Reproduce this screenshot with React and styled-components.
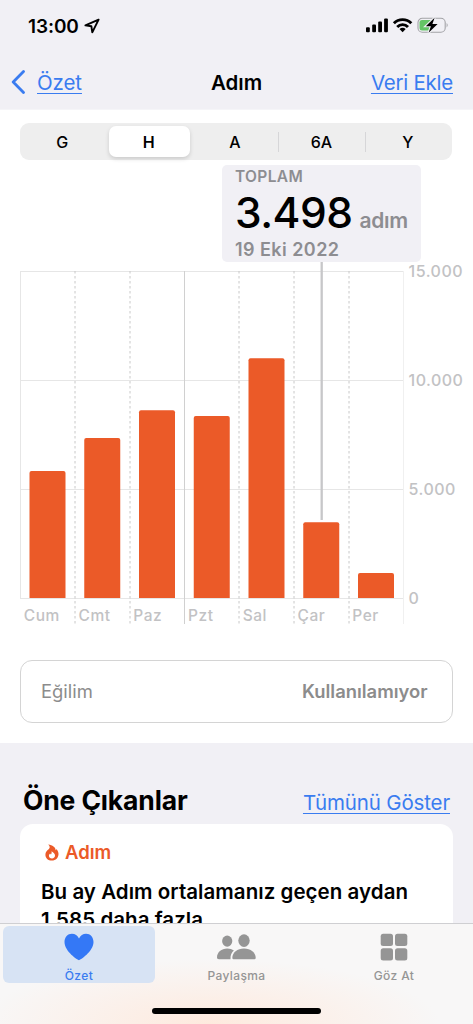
import React from 'react';
import styled, { createGlobalStyle } from 'styled-components';

const days = [
  { name: 'Cum', top: 471 },
  { name: 'Cmt', top: 438 },
  { name: 'Paz', top: 410.3 },
  { name: 'Pzt', top: 416 },
  { name: 'Sal', top: 358.3 },
  { name: 'Çar', top: 522.2 },
  { name: 'Per', top: 573 },
];

const levels = [
  { label: '15.000', y: 271.5 },
  { label: '10.000', y: 380.5 },
  { label: '5.000', y: 489.5 },
  { label: '0', y: 598.5 },
];

const ranges = ['G', 'H', 'A', '6A', 'Y'];

const LEFT = 20.5;
const STEP = 54.75;
const BASE = 598;

const barPath = (x, top) =>
  `M${x} ${BASE}V${top + 2}q0-2 2-2h32q2 0 2 2V${BASE}z`;

const StatusIcons = () => (
  <svg width="84" height="18" viewBox="0 0 84 18">
    <rect x="1" y="11.2" width="3.8" height="5" rx="1" />
    <rect x="7.2" y="8.6" width="3.8" height="7.6" rx="1" />
    <rect x="13.2" y="5.5" width="3.8" height="10.7" rx="1" />
    <rect x="19.1" y="2.4" width="3.8" height="13.8" rx="1" />
    <g fill="none" stroke="#000" strokeWidth="2.9">
      <path d="M28.9 7.2a12.4 12.4 0 0 1 17.4 0" />
      <path d="M32.2 10.9a7.6 7.6 0 0 1 10.8 0" />
    </g>
    <path d="M37.6 16.3l-3.1-3.2a4.5 4.5 0 0 1 6.2 0z" />
    <rect
      x="53"
      y="2.3"
      width="27.2"
      height="13.9"
      rx="4.3"
      fill="none"
      stroke="#a3a3a7"
      strokeWidth="1.1"
    />
    <path d="M81.6 7q2.2 2.2 0 4.4z" fill="#a3a3a7" />
    <path d="M57 4h10v10.5H57a2.5 2.5 0 0 1-2.5-2.5V6.5A2.5 2.5 0 0 1 57 4z" fill="#65c466" />
    <path
      d="M69.6 1.8l-8.8 8.4h5.1l-2.3 6.6 9-8.7h-5.2z"
      stroke="#f1f0f5"
      strokeWidth="2.2"
      paintOrder="stroke"
    />
  </svg>
);

const Chart = () => (
  <ChartSvg viewBox="0 262 473 370">
    {levels.map(({ label, y }) => (
      <g key={label}>
        <line x1="20" x2="403" y1={y} y2={y} stroke="#e6e6e6" />
        <AxisText x="408.5" y={y + 5.5} $size="16px">
          {label}
        </AxisText>
      </g>
    ))}
    <line x1="20.5" x2="20.5" y1="271" y2="598" stroke="#e6e6e6" />
    <line x1="403.5" x2="403.5" y1="271" y2="624" stroke="#f0f0f0" />
    {days.map(({ name, top }, i) => {
      const x = LEFT + STEP * i;
      const lineX = Math.floor(x) + (i === 3 ? 0.5 : 0);
      return (
        <g key={name}>
          {i > 0 && (
            <line
              x1={lineX}
              x2={lineX}
              y1="271"
              y2="624"
              stroke={i === 3 ? '#d0d0d0' : '#c8c8c8'}
              strokeDasharray={i === 3 ? undefined : '2.5 2.5'}
            />
          )}
          <path d={barPath(x + 9, top)} fill="#eb5a28" />
          <AxisText x={x + 3.3} y="620.5" $size="15.5px">
            {name}
          </AxisText>
        </g>
      );
    })}
    <line x1="321.7" x2="321.7" y1="262" y2="520" stroke="#c7c7c9" strokeWidth="2.3" />
  </ChartSvg>
);

const App = () => {
  return (
    <Screen>
      <GlobalStyle />
      <Header>
        <StatusBar>
          <Clock>
            13:00
            <svg width="16" height="16" viewBox="0 0 16 16">
              <path
                d="M14.6 1.6L1.4 7.4l6 .9.9 6z"
                fill="none"
                stroke="#000"
                strokeWidth="1.9"
                strokeLinejoin="round"
              />
            </svg>
          </Clock>
          <StatusIcons />
        </StatusBar>
        <NavBar>
          <BackButton>
            <svg width="14" height="24" viewBox="0 0 14 24">
              <path
                d="M12.5 1.5L2.2 12l10.3 10.5"
                fill="none"
                stroke="#3a7cf0"
                strokeWidth="2.8"
                strokeLinecap="round"
                strokeLinejoin="round"
              />
            </svg>
            <TextLink $spacing="-0.1px">Özet</TextLink>
          </BackButton>
          <NavTitle>Adım</NavTitle>
          <NavEnd>
            <TextLink $spacing="-0.25px">Veri Ekle</TextLink>
          </NavEnd>
        </NavBar>
      </Header>

      <Content>
        <ChartSection>
          <Segments>
            {ranges.map((range, i) => (
              <Segment key={range} $active={range === 'H'} $divided={i > 2}>
                {range}
              </Segment>
            ))}
          </Segments>
          <Callout>
            <CalloutLabel>TOPLAM</CalloutLabel>
            <CalloutValue>
              <span>3.498</span>
              <Unit>adım</Unit>
            </CalloutValue>
            <CalloutDate>19 Eki 2022</CalloutDate>
          </Callout>
          <Chart />
          <TrendCard>
            <span>Eğilim</span>
            <TrendValue>Kullanılamıyor</TrendValue>
          </TrendCard>
        </ChartSection>

        <Highlights>
          <HighlightsHead>
            <HighlightsTitle>Öne Çıkanlar</HighlightsTitle>
            <TextLink $spacing="-0.15px">Tümünü Göster</TextLink>
          </HighlightsHead>
          <HighlightCard>
            <CardLabel>
              <svg width="14" height="17" viewBox="0 0 14 17">
                <path
                  d="M3.2.4C7.6.9 10.5 3 10.7 6.2c.5-.3.7-.7.8-1.2 1.3 1.5 2 3.3 2 5.1 0 3.8-2.7 6.5-6.6 6.5C3 16.6.4 14.1.4 10.7.4 8.2 1.7 6.5 3.3 5.4c1-.8 1.4-1.4 1.4-2.2 0-1-.5-1.9-1.5-2.8z"
                  fill="#eb5a28"
                />
                <path
                  d="M6.5 7.2c2.1 1.1 3.5 2.5 3.5 4.4 0 1.7-1.2 2.9-3 2.9s-3.1-1.1-3.1-2.7c0-1 .5-1.8 1.2-2.4.2.5.4.8.9 1 .6-.9.8-1.9.5-3.2z"
                  fill="#fff"
                />
              </svg>
              Adım
            </CardLabel>
            <CardText>
              Bu ay Adım ortalamanız geçen aydan
              <br />
              1.585 daha fazla
            </CardText>
          </HighlightCard>
        </Highlights>
      </Content>

      <TabBar>
        <Tabs>
          <Tab $active>
            <svg width="30" height="28" viewBox="0 0 30 28">
              <path
                d="M15 27.2C14 27.2.5 18.5.5 9 .5 4.2 3.7.8 7.9.8c3.2 0 5.7 1.7 7.1 4.6C16.4 2.5 18.9.8 22.1.8c4.2 0 7.4 3.4 7.4 8.2 0 9.5-13.5 18.2-14.5 18.2z"
                fill="#3478f6"
              />
            </svg>
            Özet
          </Tab>
          <Tab>
            <svg width="40" height="28" viewBox="1 0 40 28" fill="#959595">
              <ellipse cx="11.2" cy="8.1" rx="5.1" ry="5.6" />
              <path d="M1 24.6c0-5.2 4.5-9 10.2-9 2.6 0 4.9.7 6.7 2-2.2 1.9-3.6 4.4-3.4 8.7H3c-1.3 0-2-.6-2-1.7z" />
              <ellipse cx="28" cy="7.6" rx="5.7" ry="6.3" />
              <path d="M16.3 24.9c0-5.1 5.1-9.3 11.7-9.3s11.7 4.2 11.7 9.3c0 .9-.7 1.4-2 1.4H18.3c-1.3 0-2-.5-2-1.4z" />
            </svg>
            Paylaşma
          </Tab>
          <Tab>
            <svg width="28" height="28" viewBox="0 0 28 28" fill="#959595">
              <rect x=".7" y=".8" width="12.3" height="12.3" rx="2.5" />
              <rect x="15" y=".8" width="12.3" height="12.3" rx="2.5" />
              <rect x=".7" y="15.2" width="12.3" height="12.3" rx="2.5" />
              <rect x="15" y="15.2" width="12.3" height="12.3" rx="2.5" />
            </svg>
            Göz At
          </Tab>
        </Tabs>
        <HomeIndicator />
      </TabBar>
    </Screen>
  );
};

export default App;

const GlobalStyle = createGlobalStyle`
  * {
    box-sizing: border-box;
  }
  body {
    margin: 0;
    font-family: Inter, 'Liberation Sans', sans-serif;
    color: #000;
  }
  svg {
    display: block;
    flex-shrink: 0;
  }
`;

const Screen = styled.div`
  display: flex;
  flex-direction: column;
  width: 473px;
  height: 1024px;
  overflow: hidden;
  background: #f1f0f5;
`;
const Header = styled.header`
  height: 110px;
  flex-shrink: 0;
  border-bottom: 1px solid #f5f5f8;
`;
const StatusBar = styled.div`
  display: flex;
  justify-content: space-between;
  height: 54px;
  padding: 16px 24px 0 28px;
`;
const Clock = styled.div`
  display: flex;
  align-items: center;
  gap: 5px;
  height: 20px;
  font-size: 19px;
  font-weight: 600;
  letter-spacing: -0.1px;
`;
const NavBar = styled.nav`
  display: grid;
  grid-template-columns: 1fr auto 1fr;
  align-items: center;
  height: 56px;
  padding: 0 20px;
`;
const BackButton = styled.div`
  display: flex;
  align-items: center;
  gap: 12px;
  margin-left: -9px;
`;
const NavTitle = styled.h1`
  margin: 0;
  font-size: 20.5px;
  font-weight: 600;
`;
const NavEnd = styled.div`
  text-align: right;
`;
const TextLink = styled.span`
  color: #3a7cf0;
  font-size: 20.5px;
  letter-spacing: ${({ $spacing }) => $spacing};
  text-decoration: underline;
  text-decoration-thickness: 1px;
  text-underline-offset: 3px;
  text-decoration-skip-ink: none;
`;
const Content = styled.main`
  flex: 1;
  min-height: 0;
  overflow: hidden;
`;
const ChartSection = styled.section`
  height: 633px;
  padding-top: 13px;
  background: #fff;
`;
const Segments = styled.div`
  display: grid;
  grid-template-columns: repeat(5, 1fr);
  width: 432px;
  height: 37px;
  margin-left: 20px;
  padding: 3px 0;
  border-radius: 9px;
  background: #eeeeee;
`;
const Segment = styled.div`
  display: flex;
  align-items: center;
  justify-content: center;
  margin: 0 2.5px;
  padding-right: 2px;
  border-radius: 7px;
  font-size: 16px;
  font-weight: ${({ $active }) => ($active ? 600 : 500)};
  background: ${({ $active }) => ($active ? '#fff' : 'none')};
  box-shadow: ${({ $active }) => ($active ? '0 2px 4px rgba(0, 0, 0, 0.15)' : 'none')};

  &::before {
    content: '';
    display: ${({ $divided }) => ($divided ? 'block' : 'none')};
    width: 1px;
    height: 20px;
    margin-left: -3.5px;
    margin-right: auto;
    background: #d6d6d8;
  }
  &::after {
    content: '';
    display: ${({ $divided }) => ($divided ? 'block' : 'none')};
    margin-left: auto;
    margin-right: -2.5px;
  }
`;
const Callout = styled.div`
  width: 199px;
  height: 97px;
  margin: 5px 0 0 222px;
  padding: 3px 0 0 13px;
  border-radius: 5px;
  background: #f1f0f5;
  color: #8d8d91;
  font-weight: 600;
  white-space: nowrap;
`;
const CalloutLabel = styled.div`
  font-size: 15.5px;
  line-height: 18px;
  letter-spacing: 0.35px;
`;
const CalloutValue = styled.div`
  display: flex;
  align-items: baseline;
  gap: 7px;
  height: 53px;
  color: #000;
  font-size: 42.5px;
  font-weight: 500;
  line-height: 53px;
  letter-spacing: -0.5px;
`;
const Unit = styled.span`
  color: #8d8d91;
  font-size: 21px;
  font-weight: 600;
  line-height: 26px;
  letter-spacing: -0.3px;
`;
const CalloutDate = styled.div`
  font-size: 18px;
  line-height: 22px;
  letter-spacing: 0.45px;
`;
const ChartSvg = styled.svg`
  width: 473px;
  height: 370px;
`;
const AxisText = styled.text`
  fill: #c2c2c4;
  font-size: ${({ $size }) => $size};
  font-weight: 500;
  letter-spacing: 0.5px;
`;
const TrendCard = styled.div`
  display: flex;
  align-items: center;
  justify-content: space-between;
  width: 433px;
  height: 63px;
  margin: 28px 0 0 20px;
  padding: 0 24.5px 2px 20px;
  border: 1.5px solid #d4d4d4;
  border-radius: 12px;
  color: #8c8c8c;
  font-size: 18.4px;
`;
const TrendValue = styled.span`
  font-weight: 600;
`;
const Highlights = styled.section`
  padding: 37px 20px 0;
`;
const HighlightsHead = styled.div`
  display: flex;
  align-items: center;
  justify-content: space-between;
  height: 44px;
  padding: 0 3px;
`;
const HighlightsTitle = styled.h2`
  margin: 0 0 4px;
  font-size: 26.5px;
  font-weight: 700;
  letter-spacing: -0.15px;
`;
const HighlightCard = styled.article`
  height: 240px;
  padding: 17px 21px;
  border-radius: 13px;
  background: #fff;
`;
const CardLabel = styled.div`
  display: flex;
  align-items: center;
  gap: 6px;
  height: 22px;
  margin-left: 4px;
  color: #eb5a28;
  font-size: 18.5px;
  font-weight: 600;
`;
const CardText = styled.p`
  margin: 15px 0 0;
  font-size: 20.5px;
  font-weight: 600;
  line-height: 28px;
  letter-spacing: 0.05px;
  white-space: nowrap;
`;
const TabBar = styled.footer`
  flex-shrink: 0;
  height: 101px;
  border-top: 1px solid #cfcfd2;
  background: radial-gradient(ellipse 230px 65px at 210px 100%, #feeade, rgba(254, 234, 222, 0) 100%), #f8f7f7;
`;
const Tabs = styled.div`
  display: flex;
  justify-content: space-between;
  height: 60px;
  padding: 2px 3px 0;
`;
const Tab = styled.div`
  display: flex;
  flex-direction: column;
  align-items: center;
  width: 152px;
  height: 57px;
  padding-top: 7px;
  gap: 7px;
  border-radius: 6px;
  background: ${({ $active }) => ($active ? '#d7e3f4' : 'none')};
  color: ${({ $active }) => ($active ? '#3a7cf0' : '#959595')};
  font-size: 12px;
  font-weight: 500;
  line-height: 16px;
  letter-spacing: 0.4px;
`;
const HomeIndicator = styled.div`
  width: 169px;
  height: 6px;
  margin: 24px auto 0;
  border-radius: 3px;
  background: #000;
`;
